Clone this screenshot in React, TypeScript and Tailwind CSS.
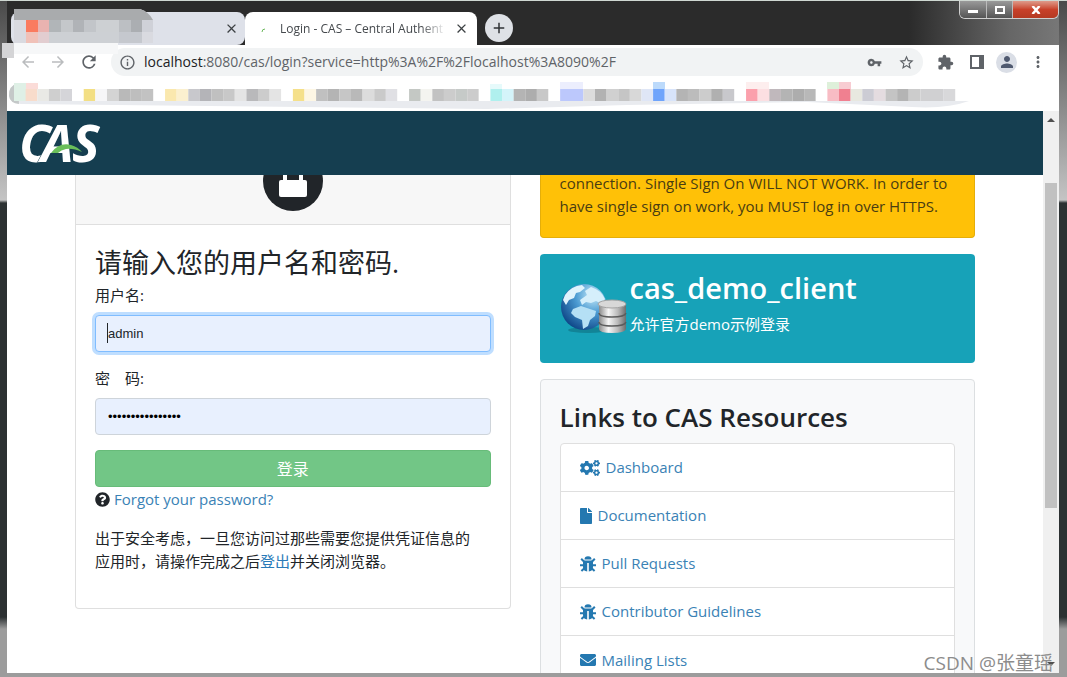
import { useState } from 'react'
import type { ReactNode } from 'react'
import {
  MdAdd,
  MdArrowBack,
  MdArrowForward,
  MdClose,
  MdExtension,
  MdInfoOutline,
  MdMoreVert,
  MdPerson,
  MdRefresh,
  MdStarBorder,
  MdVpnKey,
} from 'react-icons/md'
import { FaCogs, FaEnvelope, FaFile, FaQuestionCircle } from 'react-icons/fa'

// Runs of equally wide cells: [colour, count]
const bookmarkCells: [string, number][] = [
  ['#dff0e6', 1], ['#f8dccb', 1], ['#e9e9e5', 1], ['#cfcfcf', 1], ['#d5d5d9', 1], ['#ffffff', 1],
  ['#f3df84', 1], ['#f6f6f8', 1], ['#d4d4d4', 1], ['#b9b9b9', 1], ['#bebebe', 1], ['#c2c2c2', 1],
  ['#ffffff', 1], ['#fae8ae', 1], ['#fbf0cf', 1], ['#c8c8cc', 1], ['#b4b4b8', 1], ['#c0c0c0', 1],
  ['#c8c8c8', 1], ['#e4e4e4', 1], ['#b9b9bb', 1], ['#cccccc', 1], ['#e4e4e4', 1], ['#ffffff', 1],
  ['#f5e08a', 1], ['#fdf6e4', 1], ['#c0c0c0', 1], ['#b4b4b4', 1], ['#c6c6c6', 1], ['#b9b9b9', 1],
  ['#dcdcdc', 1], ['#cacaca', 1], ['#e0e0e4', 1], ['#ffffff', 1], ['#c4c8c4', 1], ['#f4f4f0', 1],
  ['#c2c2c2', 1], ['#cccccc', 1], ['#c6cac8', 1], ['#cccccc', 1], ['#ffffff', 1], ['#b0f0ee', 1],
  ['#d4f4fa', 1], ['#b4b4b4', 1], ['#adadad', 1], ['#c8c8c8', 1], ['#ffffff', 1], ['#bcc8fc', 2],
  ['#dcdcdc', 1], ['#b2b2b2', 1], ['#d0d0d0', 1], ['#c5c5c5', 1], ['#d8d8d8', 1], ['#dfe6f6', 1],
  ['#6fa4fb', 1], ['#d8e4fa', 1], ['#b4b4b4', 1], ['#bcbcbc', 1], ['#cccccc', 1], ['#b0b0b0', 1],
  ['#c8c8cc', 1], ['#ffffff', 1], ['#fba0ac', 1], ['#fcdfe2', 1], ['#c0b8bc', 1], ['#b4b4b4', 1],
  ['#adadad', 1], ['#b8b8b8', 1], ['#ffffff', 1], ['#f8bcc4', 1], ['#f08090', 1], ['#e8e8e0', 1],
  ['#ccccd4', 1], ['#e4dce0', 1], ['#c4c4c4', 1], ['#b4b4b4', 1], ['#cccccc', 1], ['#d0d0d2', 2],
  ['#d8d8da', 1],
]

function BugIcon() {
  return (
    <svg width="16" height="16" viewBox="0 0 16 16" className="block" aria-hidden="true">
      <path d="M4.5 3.6a3.5 3.3 0 0 1 7 0z" fill="currentColor" />
      <path d="M3 4.4h10v6.6q0 4-4.2 4.6V7H7.2v8.6Q3 15 3 11z" fill="currentColor" />
      <path
        d="M1.2 2.8l3 3M14.8 2.8l-3 3M0 9.2h4M16 9.2h-4M1.4 15l3-2.8M14.6 15l-3-2.8"
        fill="none"
        stroke="currentColor"
        strokeWidth="2"
      />
    </svg>
  )
}

const links: { label: string; icon: ReactNode }[] = [
  { label: 'Dashboard', icon: <FaCogs className="h-4 w-5" /> },
  { label: 'Documentation', icon: <FaFile className="h-4 w-3" /> },
  { label: 'Pull Requests', icon: <BugIcon /> },
  { label: 'Contributor Guidelines', icon: <BugIcon /> },
  { label: 'Mailing Lists', icon: <FaEnvelope className="size-4" /> },
]

function Bookmarks() {
  let x = 0
  const rects = bookmarkCells.map(([fill, n], i) => {
    const rect = <rect key={i} x={7 + x * 11.62} y="7" width={n * 11.62} height="12" fill={fill} />
    x += n
    return rect
  })
  return (
    <svg width="966" height="29" viewBox="0 0 966 29" className="block" aria-hidden="true">
      <path d="M10 1Q2 5 2 13T14 22L480 27 620 23 800 20 905 25Q940 27 962 19H10z" fill="#e9ebef" />
      <path d="M11 1Q1 4 2 14Q3 21 12 22z" fill="#c4c8c8" />
      <rect x="7" y="1" width="940" height="18" fill="#ffffff" opacity="0.85" />
      <rect x="7" y="1" width="12" height="18" fill="#dff0e6" />
      <rect x="19" y="1" width="12" height="6" fill="#fbdcd8" />
      {rects}
      <rect x="483" y="2" width="12" height="5" fill="#e6fafb" />
      <rect x="553" y="0" width="23" height="7" fill="#eceefd" />
      <rect x="646" y="0" width="12" height="7" fill="#bcdafb" />
      <rect x="739" y="0" width="23" height="7" fill="#fdeeee" />
      <rect x="820" y="0" width="12" height="7" fill="#def0da" />
      <rect x="832" y="0" width="12" height="7" fill="#f8ccd2" />
    </svg>
  )
}

function TabMosaic() {
  return (
    <svg width="152" height="50" viewBox="0 0 152 50" className="absolute left-0.5 top-2 z-10" aria-hidden="true">
      <path d="M12 0H138Q147 3 151 11V34H12z" fill="#d9dae0" />
      <path d="M12 0H138Q147 3 151 11H12z" fill="#a9abad" />
      <rect y="34" width="116" height="11" fill="#f6f7f8" />
      <rect y="34" width="12" height="15" fill="#d4d4d6" />
      <rect x="24" y="11" width="12" height="12" fill="#fa7b5f" />
      <rect x="36" y="11" width="11" height="12" fill="#e9b3b0" />
      <rect x="47" y="11" width="12" height="12" fill="#b1b5b8" />
      <rect x="59" y="11" width="12" height="12" fill="#c4c7ca" />
      <rect x="71" y="11" width="11" height="12" fill="#b0b3b7" />
      <rect x="82" y="11" width="12" height="12" fill="#c2c5c9" />
      <rect x="94" y="11" width="23" height="12" fill="#cdd0d3" />
      <rect x="117" y="11" width="12" height="12" fill="#bcbfc3" />
      <rect x="129" y="11" width="11" height="12" fill="#abaeb2" />
      <rect x="140" y="11" width="11" height="12" fill="#cfd1d8" />
      <rect x="24" y="23" width="12" height="11" fill="#f0c1b8" />
      <rect x="36" y="23" width="11" height="11" fill="#e2cdd0" />
      <rect x="47" y="23" width="70" height="11" fill="#cdd0d4" />
      <rect x="117" y="23" width="23" height="11" fill="#c5c8ce" />
    </svg>
  )
}

function CasLogo() {
  return (
    <svg width="110" height="64" viewBox="0 0 110 64" className="overflow-visible" role="img" aria-label="CAS">
      <text
        y="51"
        fill="#ffffff"
        stroke="#153e50"
        strokeWidth="1"
        paintOrder="stroke"
        fontFamily="'Open Sans', sans-serif"
        fontSize="52"
        fontWeight="700"
        fontStyle="italic"
      >
        <tspan x="-2">C</tspan>
        <tspan x="20">A</tspan>
        <tspan x="51">S</tspan>
      </text>
      <path d="M30 42Q38 31 50 34Q57 36 61 41Q52 37 45 38Q40 39 37 42z" fill="#6abf5a" />
    </svg>
  )
}

function ServiceIcon() {
  return (
    <svg width="68" height="52" viewBox="0 0 68 52" aria-hidden="true" className="shrink-0">
      <defs>
        <radialGradient id="globe" cx="0.7" cy="0.25" r="0.85">
          <stop offset="0" stopColor="#c9ecfa" />
          <stop offset="0.45" stopColor="#4b9bd2" />
          <stop offset="1" stopColor="#0a4183" />
        </radialGradient>
        <linearGradient id="disk">
          <stop offset="0" stopColor="#8a8a8a" />
          <stop offset="0.35" stopColor="#f6f6f6" />
          <stop offset="0.7" stopColor="#b9b9b9" />
          <stop offset="1" stopColor="#6d6d6d" />
        </linearGradient>
      </defs>
      <ellipse cx="28" cy="47" rx="20" ry="3" fill="#0f6f80" opacity="0.6" />
      <circle cx="24" cy="24" r="23" fill="url(#globe)" />
      <path d="M5 12Q11 3 22 2L25 5 20 9 16 10 14 15 9 17 6 22 3 17z" fill="#dff3fc" />
      <path d="M20 17L27 12 25 8 31 4Q41 7 45 16L42 21 36 18 31 20 26 19 22 22z" fill="#d5effb" />
      <path d="M13 26L21 23 30 26 36 28 35 33 30 37 28 43 23 46 22 37 15 34 11 30z" fill="#b5e0f5" />
      <path d="M39 22v24q0 4 13 4t14-4V22z" fill="url(#disk)" />
      <ellipse cx="52" cy="21" rx="14" ry="4" fill="#d8d8d8" stroke="#a2a2a2" />
      <path d="M39 30q0 4 13 4t14-4M39 39q0 4 13 4t14-4" fill="none" stroke="#5c5c5c" strokeWidth="1.5" />
    </svg>
  )
}

function TitleBar() {
  return (
    <div className="relative flex h-11 shrink-0 items-start bg-[linear-gradient(to_right,#2b2b2b_0,#2b2b2b_calc(100%-150px),#666_calc(100%-50px),#777_100%)]">
      <div className="flex h-full min-w-0 flex-1 items-start pl-1 pt-[11px]">
        <div className="flex h-[33px] w-[234px] items-center justify-end rounded-lg bg-[#dee1e9] pr-1.5">
          <button aria-label="Close tab" className="text-[#3c4043]"><MdClose size={15} /></button>
        </div>
        <div className="flex h-[33px] w-[232px] items-center gap-3 rounded-t-lg bg-white pl-4 pr-2">
          <svg width="7" height="8" viewBox="0 0 7 8" className="shrink-0" aria-hidden="true">
            <path d="M1 7Q1 4 4 4" fill="none" stroke="#6cb85c" strokeWidth="1" />
          </svg>
          <span className="min-w-0 flex-1 whitespace-nowrap text-[12px] text-[#45494d] mask-r-from-85%">
            Login - CAS – Central Authent
          </span>
          <button aria-label="Close tab" className="-ml-1 text-[#3c4043]"><MdClose size={15} /></button>
        </div>
        <button
          aria-label="New tab"
          className="ml-2 mt-0.5 flex size-7 items-center justify-center rounded-full bg-[#dee1e6] text-[#2f3236]"
        >
          <MdAdd size={18} />
        </button>
      </div>
      <div className="flex h-[18px] overflow-hidden rounded-b-md border border-t-0 border-[#d0d0d0]">
        <button aria-label="Minimize" className="flex w-[27px] items-center justify-center border-r border-[#bbb] bg-linear-to-b from-[#9a9a9a] to-[#555]">
          <span className="mt-1 h-[3px] w-2.5 bg-white" />
        </button>
        <button aria-label="Maximize" className="flex w-[26px] items-center justify-center border-r border-[#bbb] bg-linear-to-b from-[#9a9a9a] to-[#555]">
          <span className="h-2 w-2.5 border-2 border-white" />
        </button>
        <button aria-label="Close" className="flex w-[45px] items-center justify-center bg-linear-to-b from-[#dd9a8a] via-[#c8412a] to-[#b53a22]">
          <svg width="10" height="8" viewBox="0 0 10 8" aria-hidden="true">
            <path d="M1.5 0L8.5 8M8.5 0L1.5 8" stroke="#ffffff" strokeWidth="2.5" />
          </svg>
        </button>
      </div>
    </div>
  )
}

function Toolbar() {
  return (
    <div className="shrink-0 bg-white">
      <div className="flex h-[34px] items-center pl-3 pr-3 text-[#5f6368]">
        <button aria-label="Back" className="text-[#babcbe]"><MdArrowBack size={18} /></button>
        <button aria-label="Forward" className="ml-3 text-[#babcbe]"><MdArrowForward size={18} /></button>
        <button aria-label="Reload" className="ml-3"><MdRefresh size={20} /></button>
        <div className="ml-3 flex h-7 min-w-0 flex-1 items-center rounded-full bg-[#f1f3f4] pl-2 pr-2">
          <MdInfoOutline size={17} className="shrink-0" />
          <div
            role="textbox"
            aria-label="Address"
            contentEditable
            suppressContentEditableWarning
            className="ml-2 min-w-0 flex-1 overflow-hidden whitespace-nowrap text-[14px] leading-6"
          >
            <span className="text-[#202124]">localhost</span>:8080/cas/login?service=http%3A%2F%2Flocalhost%3A8090%2F
          </div>
          <button aria-label="Passwords"><MdVpnKey size={15} /></button>
          <button aria-label="Bookmark" className="ml-4"><MdStarBorder size={17} /></button>
        </div>
        <button aria-label="Extensions" className="ml-3.5"><MdExtension size={17} /></button>
        <button aria-label="Side panel" className="ml-4">
          <svg width="14" height="14" viewBox="0 0 14 14" className="block">
            <path d="M1 1h12v12H1z" fill="none" stroke="currentColor" strokeWidth="2" />
            <path d="M9 1h4v12H9z" fill="currentColor" />
          </svg>
        </button>
        <button aria-label="Profile" className="ml-3 flex size-[21px] items-center justify-center rounded-full bg-[#dadee6] text-[#505a70]">
          <MdPerson size={18} />
        </button>
        <button aria-label="Menu" className="ml-3"><MdMoreVert size={18} /></button>
      </div>
      <div className="h-8 overflow-hidden pt-[3px]">
        <Bookmarks />
      </div>
    </div>
  )
}

function LoginCard() {
  const [username, setUsername] = useState('admin')
  const [password, setPassword] = useState('passwordpassword')

  return (
    <section className="rounded-b border border-t-0 border-[#dfdfdf]">
      <div className="flex h-[50px] items-start justify-center border-b border-[#dfdfdf] bg-[#f7f7f7]">
        {/* lower part of the round lock badge, the rest is scrolled away */}
        <svg width="60" height="36" viewBox="0 24 60 36" aria-hidden="true">
          <circle cx="30" cy="30" r="30" fill="#212529" />
          <path d="M22 34V24a8 8 0 0 1 16 0v10" fill="none" stroke="#ffffff" strokeWidth="4" />
          <rect x="16" y="29" width="28" height="17" rx="2" fill="#ffffff" />
        </svg>
      </div>
      <form className="px-[19px] pb-[35px] pt-[22px]" onSubmit={(e) => e.preventDefault()}>
        <h3 className="text-[27px] leading-8">请输入您的用户名和密码.</h3>
        <label htmlFor="username" className="mt-1 block leading-6">用户名:</label>
        <div className="relative mt-2">
          <input
            id="username"
            value={username}
            onChange={(e) => setUsername(e.target.value)}
            className="block h-[37px] w-full rounded border border-[#80bdff] bg-[#e8f0fe] px-3 font-['Liberation_Sans',sans-serif] text-[13px] ring-3 ring-[#bfdeff] outline-none"
          />
          <span className="pointer-events-none absolute left-3 top-2 h-5 w-px bg-[#212529]" />
        </div>
        <label htmlFor="password" className="mt-3.5 block whitespace-pre leading-6">密　码:</label>
        <input
          id="password"
          type="password"
          value={password}
          onChange={(e) => setPassword(e.target.value)}
          className="mt-2 block h-[37px] w-full rounded border border-[#ced4da] bg-[#e8f0fe] px-3 font-['Liberation_Sans',sans-serif] text-[13px] text-black outline-none"
        />
        <button className="mt-[15px] block h-[37px] w-full rounded border border-[#67bb79] bg-[#72c686] text-base text-white">
          登录
        </button>
        <div className="flex h-6 items-center gap-1">
          <FaQuestionCircle size={15} />
          <a href="#forgot" className="text-[#3a82b5]">Forgot your password?</a>
        </div>
        <p className="mt-4 leading-[23px]">
          出于安全考虑，一旦您访问过那些需要您提供凭证信息的
          <br />
          应用时，请操作完成之后<a href="#logout" className="text-[#2a7ab8]">登出</a>并关闭浏览器。
        </p>
      </form>
    </section>
  )
}

function SideColumn() {
  return (
    <div className="flex flex-col gap-4">
      <section className="rounded-b border border-t-0 border-[#e5ae09] bg-[#ffc107] px-[19px] pb-[19px] text-[#4a3d12]">
        <p className="-mt-[3px] leading-[23px]">
          connection. Single Sign On WILL NOT WORK. In order to
          <br />
          have single sign on work, you MUST log in over HTTPS.
        </p>
      </section>

      <section className="flex h-[109px] items-center rounded bg-[#17a2b8] px-5 text-white">
        <ServiceIcon />
        <div className="pb-3 pl-0.5">
          <h2 className="text-[29px] font-semibold leading-9">cas_demo_client</h2>
          <p className="mt-1.5 leading-6">允许官方demo示例登录</p>
        </div>
      </section>

      <section className="rounded border border-[#dcdfe1] bg-[#f8f9fa] px-[19px] pb-5 pt-[19px]">
        <h3 className="text-[26px] font-semibold leading-9">Links to CAS Resources</h3>
        <ul className="mt-2 rounded border border-[#dfdfdf] bg-white">
          {links.map((link) => (
            <li key={link.label} className="h-12 border-b border-[#dfdfdf] px-[19px] last:border-b-0">
              <a href="#" className="flex h-full items-center gap-1.5 text-[#3a82b5]">
                <span className="text-[#2478b0]">{link.icon}</span>
                {link.label}
              </a>
            </li>
          ))}
        </ul>
      </section>
    </div>
  )
}

export default function App() {
  return (
    <div className="relative flex h-screen flex-col overflow-hidden border-t border-[#cfd8d2] bg-[linear-gradient(to_bottom,#4a4a4a_0,#7a7a7a_80px,#c4c4c4_199px,#2c3132_202px,#2c3132_calc(100%-60px),#9c9c9c_calc(100%-48px))] pl-[7px] pr-2 pb-1 font-['Open_Sans','Noto_Sans_CJK_SC',sans-serif] text-[15px] text-[#212529]">
      <TabMosaic />
      <TitleBar />
      <Toolbar />
      <div className="flex min-h-0 flex-1">
        <div className="flex min-w-0 flex-1 flex-col bg-white">
          <header className="flex h-16 shrink-0 items-center bg-[#153e50] pl-3.5">
            <CasLogo />
          </header>
          <main className="grid min-h-0 flex-1 grid-cols-2 items-start gap-[29px] overflow-hidden px-[68px]">
            <LoginCard />
            <SideColumn />
          </main>
        </div>
        <div className="flex w-4 shrink-0 flex-col items-center bg-[#f0f0f0]">
          <svg width="8" height="18" viewBox="0 0 8 18" aria-hidden="true">
            <path d="M0 11L4 7L8 11z" fill="#505050" />
          </svg>
          <div className="mt-[54px] h-[325px] w-3 bg-[#c1c1c1]" />
          <svg width="8" height="18" viewBox="0 0 8 18" className="mt-auto" aria-hidden="true">
            <path d="M0 7L4 11L8 7z" fill="#505050" />
          </svg>
        </div>
      </div>
      <span className="absolute bottom-0.5 right-3.5 whitespace-nowrap text-[19px] leading-6 text-[#8c8c8c]">
        CSDN @张童瑶
      </span>
    </div>
  )
}
